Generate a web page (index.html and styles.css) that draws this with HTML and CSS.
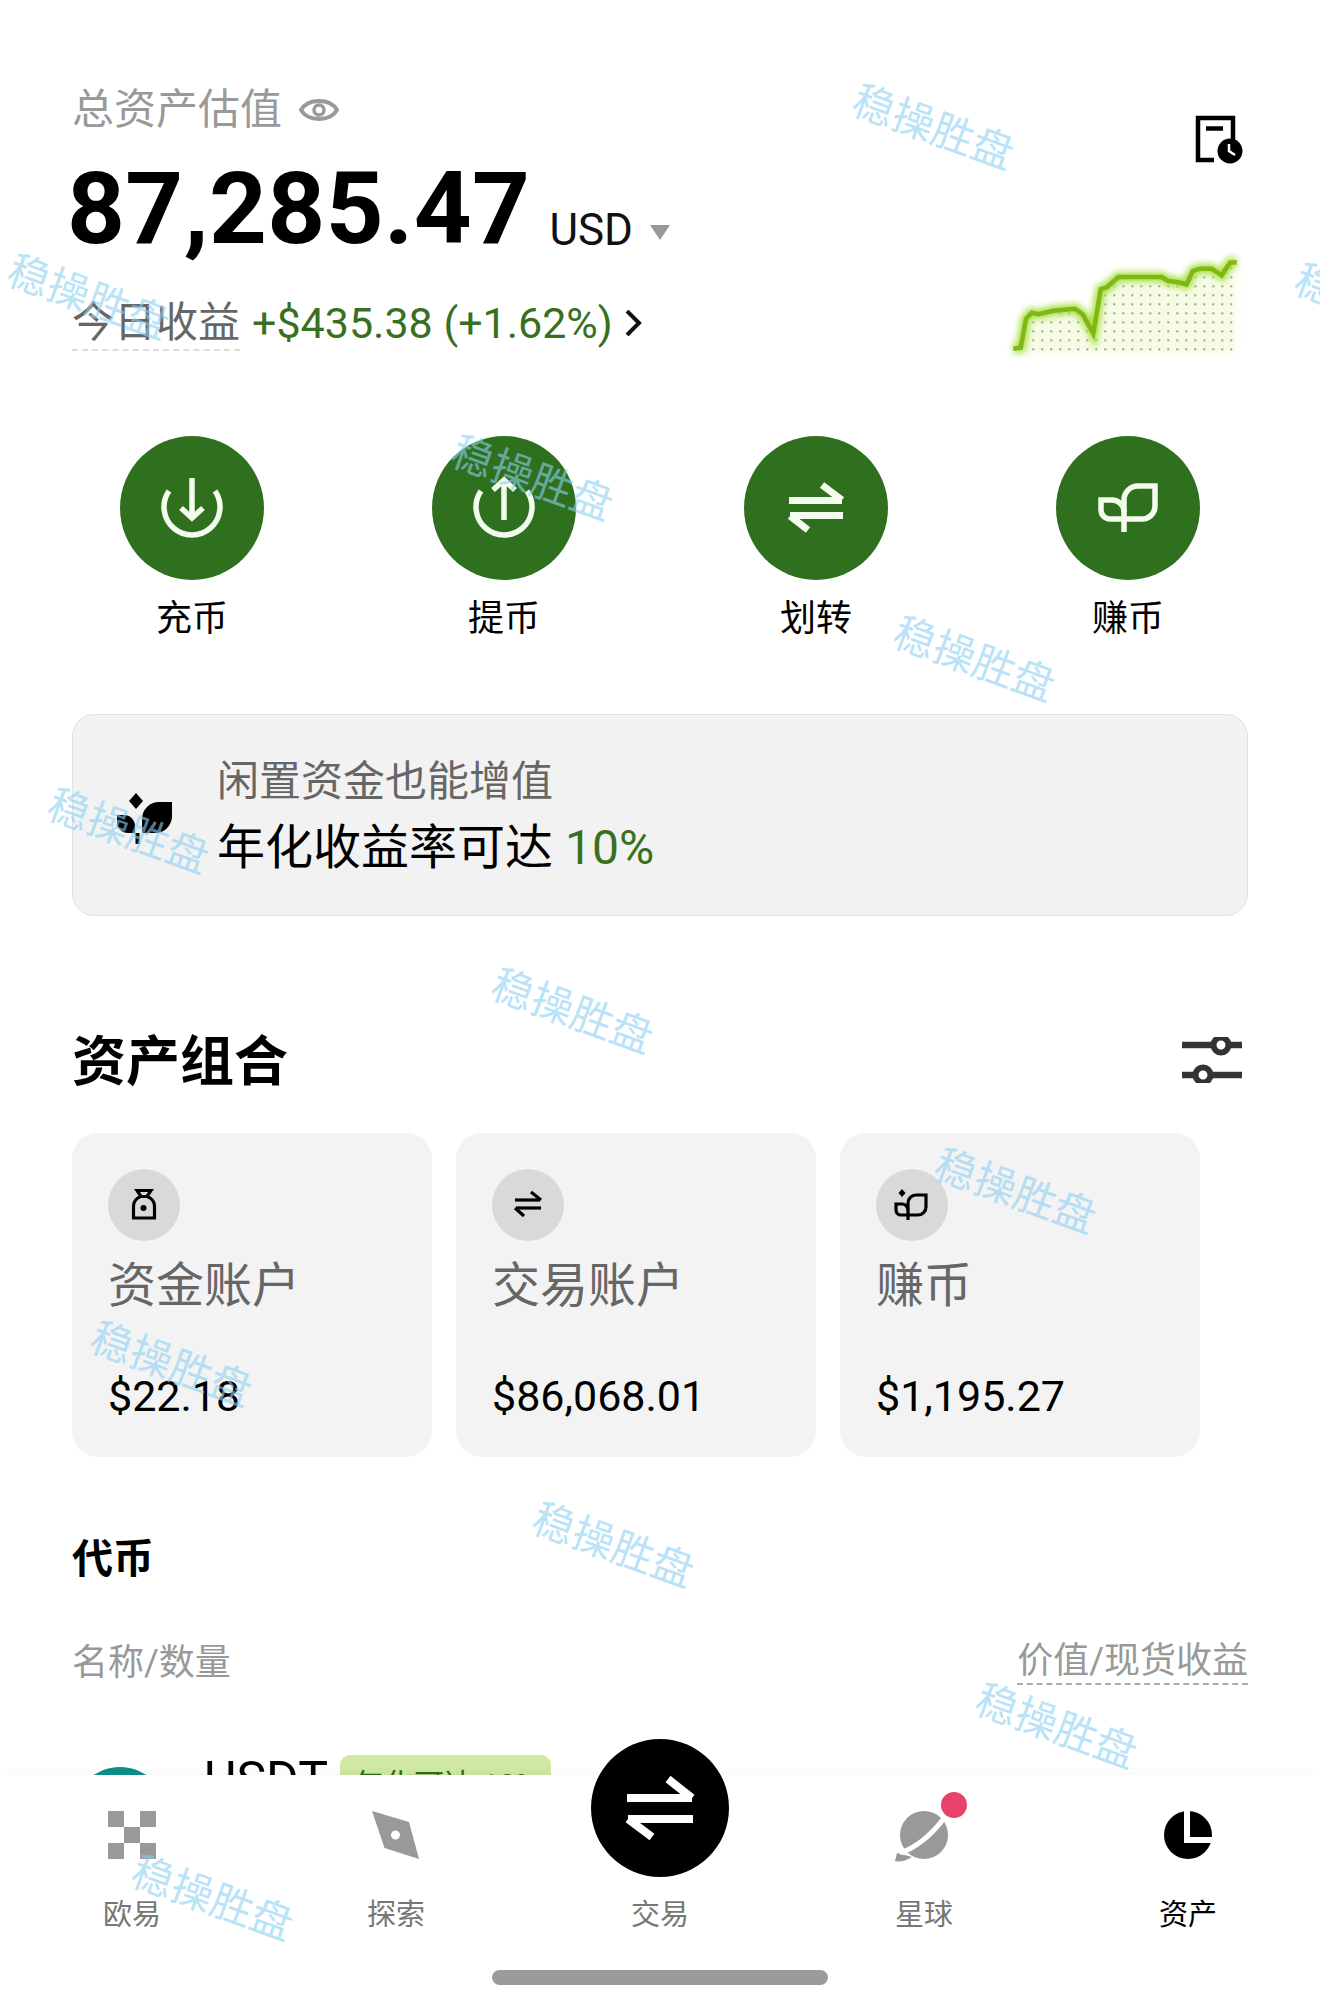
FILE: index.html
```html
<!DOCTYPE html>
<html lang="zh-CN">
<head>
    <meta charset="UTF-8">
    <meta name="viewport" content="width=device-width, initial-scale=1.0">
    <title>资产</title>
    <link rel="stylesheet" href="styles.css">
</head>
<body>

<div class="screen">
    <div class="content">
        <!-- 总资产 -->
        <section class="summary">
            <div class="summary-left">
                <div class="total-label">
                    总资产估值
                    <svg class="eye" viewBox="0 0 40 30" width="40" height="30">
                        <path d="M2 15C9 3 31 3 38 15C31 27 9 27 2 15Z" fill="none" stroke="#999" stroke-width="4"/>
                        <circle cx="20" cy="15" r="5" fill="none" stroke="#999" stroke-width="3.5"/>
                    </svg>
                </div>
                <div class="total-row">
                    <span class="total-num">87,285.47</span>
                    <span class="total-unit">USD</span>
                    <span class="caret"></span>
                </div>
                <div class="today-row">
                    <span class="today-label">今日收益</span>
                    <span class="today-value">+$435.38 (+1.62%)</span>
                    <svg class="chevron" viewBox="0 0 18 26" width="18" height="26">
                        <path d="M3 1L15 13L3 25" fill="none" stroke="#111" stroke-width="4"/>
                    </svg>
                </div>
            </div>
            <div class="summary-right">
                <svg class="doc-icon" viewBox="0 0 60 60" width="60" height="60">
                    <path d="M43 32V8H8V50H24" fill="none" stroke="#000" stroke-width="4.5"/>
                    <path d="M16 18.5H33" fill="none" stroke="#000" stroke-width="4.5"/>
                    <circle cx="40" cy="41" r="12.5" fill="#000"/>
                    <path d="M39 34V41L45 45" fill="none" stroke="#fff" stroke-width="2.5"/>
                </svg>
                <svg class="spark" viewBox="0 0 240 110" width="240" height="110">
                    <defs>
                        <pattern id="dots" patternUnits="userSpaceOnUse" x="27.3" y="96.3" width="9" height="9">
                            <rect width="2" height="2" fill="#9aa67a"/>
                        </pattern>
                        <filter id="glow" x="-10%" y="-30%" width="120%" height="160%">
                            <feGaussianBlur stdDeviation="3"/>
                        </filter>
                        <filter id="soft" x="-10%" y="-30%" width="120%" height="160%">
                            <feGaussianBlur stdDeviation="4"/>
                        </filter>
                    </defs>
                    <path class="spark-fill" filter="url(#soft)" d="M21 66.7L26.7 60.7L33.3 62.3L48.3 58.7L70 56.7L77.7 62.3L88.3 81.7L95.7 37.3L102.3 35L113.3 25L156.7 25L163.3 29L171.7 30L181.7 32.3L187.7 19L195 16.7L206.7 16.7L216.7 23.3L225 10.7L231 10.3V101H15Z"/>
                    <path fill="url(#dots)" d="M24 66.7L26.7 60.7L33.3 62.3L48.3 58.7L70 56.7L77.7 62.3L88.3 81.7L95.7 37.3L102.3 35L113.3 25L156.7 25L163.3 29L171.7 30L181.7 32.3L187.7 19L195 16.7L206.7 16.7L216.7 23.3L225 10.7L229 10.3V101H24Z"/>
                    <path class="spark-glow" filter="url(#glow)" d="M8.3 96.7L15.7 95.7L21 66.7L26.7 60.7L33.3 62.3L48.3 58.7L70 56.7L77.7 62.3L88.3 81.7L95.7 37.3L102.3 35L113.3 25L156.7 25L163.3 29L171.7 30L181.7 32.3L187.7 19L195 16.7L206.7 16.7L216.7 23.3L225 10.7L231.7 10.3"/>
                    <path class="spark-line" d="M8.3 96.7L15.7 95.7L21 66.7L26.7 60.7L33.3 62.3L48.3 58.7L70 56.7L77.7 62.3L88.3 81.7L95.7 37.3L102.3 35L113.3 25L156.7 25L163.3 29L171.7 30L181.7 32.3L187.7 19L195 16.7L206.7 16.7L216.7 23.3L225 10.7L231.7 10.3"/>
                </svg>
            </div>
        </section>

        <!-- 快捷操作 -->
        <nav class="actions">
            <div class="action">
                <div class="action-btn">
                    <svg viewBox="0 0 72 72" width="72" height="72">
                        <path d="M13 19A28 28 0 1 0 59 19" /><path d="M36 6V46" /><path d="M25 36L36 46L47 36" />
                    </svg>
                </div>
                <span>充币</span>
            </div>
            <div class="action">
                <div class="action-btn">
                    <svg viewBox="0 0 72 72" width="72" height="72">
                        <path d="M13 19A28 28 0 1 0 59 19" /><path d="M36 8V48" /><path d="M25 18L36 8L47 18" />
                    </svg>
                </div>
                <span>提币</span>
            </div>
            <div class="action">
                <div class="action-btn">
                    <svg class="swap-icon" viewBox="0 0 72 72" width="72" height="72">
                        <path d="M9 28.500H62" /><path d="M42 13L62 28" /><path d="M63 43.500H10" /><path d="M10 44L28 58" />
                    </svg>
                </div>
                <span>划转</span>
            </div>
            <div class="action">
                <div class="action-btn">
                    <svg viewBox="0 0 72 72" width="72" height="72">
                        <path d="M32 47H50A13 13 0 0 0 63 34V14H46A14 14 0 0 0 32 28V60" />
                        <path d="M32 47H18A9 9 0 0 1 9 38V28H20A12 12 0 0 1 32 40" />
                    </svg>
                </div>
                <span>赚币</span>
            </div>
        </nav>

        <!-- 赚币横幅 -->
        <div class="banner">
            <svg class="banner-icon" viewBox="0 0 56 52" width="56" height="52">
                <path d="M19 0L26 8L19 16L12 8Z" />
                <path d="M25 26A17 17 0 0 1 42 9H55V24A17 17 0 0 1 38 40H25Z" />
                <path d="M0 22H7A11 11 0 0 1 18 33V40H11A11 11 0 0 1 0 29Z" />
                <rect x="18.500" y="40" width="4" height="11" />
            </svg>
            <div class="banner-text">
                <div class="banner-sub">闲置资金也能增值</div>
                <div class="banner-main">年化收益率可达 <em>10%</em></div>
            </div>
        </div>

        <!-- 资产组合 -->
        <div class="section-head">
            <h2>资产组合</h2>
            <svg class="filter-icon" viewBox="0 0 62 46" width="62" height="46">
                <path d="M1 8H61M1 38H61" stroke="#333" stroke-width="6.5" fill="none"/>
                <circle cx="40" cy="8" r="7.500" fill="#fff" stroke="#333" stroke-width="6"/>
                <circle cx="22" cy="38" r="7.500" fill="#fff" stroke="#333" stroke-width="6"/>
            </svg>
        </div>

        <div class="cards">
            <div class="card">
                <div class="card-icon">
                    <svg viewBox="0 0 72 72" width="72" height="72">
                        <path d="M29 21.500H43L39 27.500H33Z" />
                        <path d="M33 27.500A10 10 0 0 0 25.500 38V49H46.500V38A10 10 0 0 0 39 27.500" />
                        <circle cx="35.500" cy="39" r="3" class="solid" />
                    </svg>
                </div>
                <div class="card-name">资金账户</div>
                <div class="card-value">$22.18</div>
            </div>
            <div class="card">
                <div class="card-icon">
                    <svg viewBox="0 0 72 72" width="72" height="72">
                        <path d="M23 31H48" /><path d="M39 23L49 31" /><path d="M49 39H24" /><path d="M23 39L32 47" />
                    </svg>
                </div>
                <div class="card-name">交易账户</div>
                <div class="card-value">$86,068.01</div>
            </div>
            <div class="card">
                <div class="card-icon">
                    <svg viewBox="0 0 72 72" width="72" height="72">
                        <path d="M26 20L29.500 24L26 28L22.500 24Z" class="solid" />
                        <path d="M32 46H42A8 8 0 0 0 50 38V26H40A8 8 0 0 0 32 34V51" />
                        <path d="M32 46H25A5 5 0 0 1 20 41V35H26A6 6 0 0 1 32 41" />
                    </svg>
                </div>
                <div class="card-name">赚币</div>
                <div class="card-value">$1,195.27</div>
            </div>
        </div>

        <!-- 代币 -->
        <h3 class="coin-title">代币</h3>
        <div class="coin-head">
            <span class="coin-head-left">名称/数量</span>
            <span class="coin-head-right">价值/现货收益</span>
        </div>
        <div class="coin-row">
            <div class="coin-logo"></div>
            <div class="coin-name">USDT</div>
            <div class="coin-tag">年化可达 10%</div>
        </div>
    </div>

    <!-- 底部导航 -->
    <footer class="tabbar">
        <div class="tabs">
            <div class="tab">
                <svg class="tab-icon" viewBox="0 0 64 52" width="64" height="52">
                    <path fill="#999" d="M8 0H24V16H8ZM40 0H56V16H40ZM24 16H40V32H24ZM8 32H24V48H8ZM40 32H56V48H40Z"/>
                </svg>
                <span>欧易</span>
            </div>
            <div class="tab">
                <svg class="tab-icon" viewBox="0 0 64 52" width="64" height="52">
                    <path fill="#999" fill-rule="evenodd" d="M8 0L45 11L55 48L20.500 37ZM36 24A4.500 4.500 0 1 0 27 24A4.500 4.500 0 1 0 36 24Z"/>
                </svg>
                <span>探索</span>
            </div>
            <div class="tab tab-center">
                <div class="trade-btn">
                    <svg viewBox="0 0 138 138" width="138" height="138">
                        <path d="M36 59H101" /><path d="M77 40L101 59" /><path d="M102 80H37" /><path d="M37 80L61 98" />
                    </svg>
                </div>
                <span>交易</span>
            </div>
            <div class="tab">
                <div class="planet">
                    <svg class="tab-icon" viewBox="0 0 64 52" width="64" height="52">
                        <circle cx="32" cy="24" r="24" fill="#999"/>
                        <path d="M5 42L3 50Q10 52 20 46Z" fill="#999"/>
                        <path d="M8 42Q32 34 53 6" fill="none" stroke="#fff" stroke-width="5"/>
                    </svg>
                    <span class="badge"></span>
                </div>
                <span>星球</span>
            </div>
            <div class="tab tab-active">
                <svg class="tab-icon" viewBox="0 0 64 52" width="64" height="52">
                    <circle cx="32" cy="24" r="24" fill="#000"/>
                    <path d="M31 0V29H56" fill="none" stroke="#fff" stroke-width="6"/>
                </svg>
                <span>资产</span>
            </div>
        </div>
        <div class="home-bar"></div>
    </footer>

    <!-- 水印 -->
    <span class="wm wm-1">稳操胜盘</span>
    <span class="wm wm-2">稳操胜盘</span>
    <span class="wm wm-3">稳操胜盘</span>
    <span class="wm wm-4">稳操胜盘</span>
    <span class="wm wm-5">稳操胜盘</span>
    <span class="wm wm-6">稳操胜盘</span>
    <span class="wm wm-7">稳操胜盘</span>
    <span class="wm wm-8">稳操胜盘</span>
    <span class="wm wm-9">稳操胜盘</span>
    <span class="wm wm-10">稳操胜盘</span>
    <span class="wm wm-11">稳操胜盘</span>
    <span class="wm wm-12">稳操胜盘</span>
</div>

</body>
</html>
```

FILE: styles.css
```css
body {
    margin: 0;
    padding: 0;
    background-color: #fff;
    color: #000;
    font-family: Roboto, "Noto Sans CJK SC", sans-serif;
}
.screen {
    position: relative;
    width: 1320px;
    height: 2003px;
    overflow: hidden;
    background-color: #fff;
}
.content {
    padding: 86px 72px 0;
}

/* 总资产 */
.summary {
    display: flex;
    justify-content: space-between;
}
.total-label {
    display: flex;
    align-items: center;
    gap: 17px;
    height: 48px;
    font-size: 42px;
    line-height: 48px;
    color: #999;
}
.total-row {
    display: flex;
    align-items: baseline;
    margin-top: 25px;
    margin-left: -5px;
    height: 100px;
}
.total-num {
    font-size: 101px;
    font-weight: 700;
    line-height: 100px;
    letter-spacing: 0.4px;
}
.total-unit {
    margin-left: 19px;
    font-size: 44px;
    color: #111;
    transform: translateY(2px);
}
.caret {
    align-self: center;
    width: 0;
    height: 0;
    margin-left: 17px;
    margin-top: 46px;
    border-left: 10px solid transparent;
    border-right: 10px solid transparent;
    border-top: 15px solid #999;
}
.today-row {
    display: flex;
    align-items: center;
    margin-top: 40px;
    height: 48px;
}
.today-label {
    font-size: 42px;
    line-height: 48px;
    color: #666;
    border-bottom: 2px dashed #ddd;
    padding-bottom: 2px;
    margin-bottom: -4px;
}
.today-value {
    margin-left: 12px;
    font-size: 43px;
    color: #38701f;
}
.chevron {
    margin-left: 11px;
}
.summary-right {
    display: flex;
    flex-direction: column;
    align-items: flex-end;
}
.doc-icon {
    margin-top: 24px;
    margin-right: -2px;
}
.spark {
    margin-top: 82px;
    margin-right: 3px;
}
.spark-fill {
    fill: #f6fbe6;
}
.spark-glow {
    fill: none;
    stroke: #a9df45;
    stroke-width: 10;
}
.spark-line {
    fill: none;
    stroke: #7fb814;
    stroke-width: 4.5;
}

/* 快捷操作 */
.actions {
    display: grid;
    grid-template-columns: repeat(4, 312px);
    margin: 74px -36px 0;
}
.action {
    display: flex;
    flex-direction: column;
    align-items: center;
    font-size: 36px;
    line-height: 40px;
}
.action-btn {
    display: flex;
    align-items: center;
    justify-content: center;
    width: 144px;
    height: 144px;
    margin-bottom: 19px;
    border-radius: 50%;
    background-color: #2f701f;
}
.action-btn path {
    fill: none;
    stroke: #f4fcee;
    stroke-width: 5.5;
}
.action-btn .swap-icon path {
    stroke-width: 7;
}

/* 横幅 */
.banner {
    display: flex;
    align-items: center;
    gap: 44px;
    box-sizing: border-box;
    height: 202px;
    margin-top: 75px;
    padding-left: 44px;
    background-color: #f2f2f2;
    border: 1px solid #e2e2e2;
    border-radius: 22px;
}
.banner-icon {
    fill: #000;
    margin-top: 8px;
}
.banner-sub {
    font-size: 42px;
    line-height: 66px;
    color: #666;
}
.banner-main {
    font-size: 48px;
    line-height: 66px;
}
.banner-main em {
    font-style: normal;
    color: #38701f;
}

/* 资产组合 */
.section-head {
    display: flex;
    align-items: center;
    justify-content: space-between;
    height: 64px;
    margin-top: 112px;
}
.section-head h2 {
    margin: 0 0 6px;
    font-size: 54px;
    font-weight: 700;
}
.filter-icon {
    margin-right: 5px;
}
.cards {
    display: flex;
    gap: 24px;
    margin-top: 41px;
}
.card {
    box-sizing: border-box;
    width: 360px;
    height: 324px;
    padding: 36px;
    background-color: #f3f3f3;
    border-radius: 26px;
}
.card-icon {
    width: 72px;
    height: 72px;
    border-radius: 50%;
    background-color: #d9d9d9;
}
.card-icon path {
    fill: none;
    stroke: #000;
    stroke-width: 3.2;
}
.card-icon .solid {
    fill: #000;
    stroke: none;
}
.card-name {
    margin-top: 17px;
    font-size: 48px;
    line-height: 56px;
    color: #666;
}
.card-value {
    margin-top: 57px;
    font-size: 43px;
    line-height: 50px;
}

/* 代币 */
.coin-title {
    margin: 77px 0 0;
    font-size: 41px;
    font-weight: 700;
    line-height: 50px;
}
.coin-head {
    display: flex;
    justify-content: space-between;
    align-items: flex-start;
    margin-top: 57px;
    height: 44px;
    font-size: 36px;
    line-height: 44px;
    color: #999;
}
.coin-head-right {
    margin-top: -2px;
    padding-bottom: 0;
    border-bottom: 2px dashed #aaa;
}
.coin-row {
    display: flex;
    align-items: flex-start;
    margin-top: 70px;
}
.coin-logo {
    width: 96px;
    height: 96px;
    margin-top: 12px;
    margin-right: 36px;
    border-radius: 50%;
    background-color: #0f8f8a;
}
.coin-name {
    font-size: 50px;
    line-height: 50px;
}
.coin-tag {
    margin-left: 12px;
    padding: 4px 14px;
    font-size: 30px;
    line-height: 52px;
    color: #2f6b1f;
    background-color: #cfe8a4;
    border-radius: 10px;
}

/* 底部导航 */
.tabbar {
    position: absolute;
    left: 0;
    right: 0;
    bottom: 0;
    height: 228px;
    background-color: #fff;
    box-shadow: 0 -2px 8px rgba(0, 0, 0, 0.04);
}
.tabs {
    display: grid;
    grid-template-columns: repeat(5, 264px);
    padding-top: 36px;
}
.tab {
    display: flex;
    flex-direction: column;
    align-items: center;
    font-size: 29px;
    line-height: 40px;
    color: #777;
}
.tab-icon {
    display: block;
    margin-bottom: 32px;
}
.tab-active {
    color: #000;
}
.planet {
    position: relative;
}
.badge {
    position: absolute;
    top: -19px;
    left: 49px;
    width: 26px;
    height: 26px;
    border-radius: 50%;
    background-color: #e8426b;
}
.trade-btn {
    width: 138px;
    height: 138px;
    margin-top: -72px;
    margin-bottom: 18px;
    border-radius: 50%;
    background-color: #000;
}
.trade-btn path {
    fill: none;
    stroke: #fff;
    stroke-width: 8;
}
.home-bar {
    width: 336px;
    height: 15px;
    margin: 35px auto 0;
    border-radius: 8px;
    background-color: #9b9b9b;
}

/* 水印 */
.wm {
    position: absolute;
    width: 168px;
    font-size: 42px;
    line-height: 42px;
    white-space: nowrap;
    color: rgba(140, 208, 243, 0.62);
    transform: rotate(20deg);
}
.wm-1 { left: 849px; top: 107px; }
.wm-2 { left: 4px; top: 277px; }
.wm-3 { left: 1291px; top: 286px; }
.wm-4 { left: 448px; top: 458px; }
.wm-5 { left: 890px; top: 639px; }
.wm-6 { left: 44px; top: 811px; }
.wm-7 { left: 488px; top: 991px; }
.wm-8 { left: 931px; top: 1171px; }
.wm-9 { left: 87px; top: 1344px; }
.wm-10 { left: 529px; top: 1525px; }
.wm-11 { left: 972px; top: 1706px; }
.wm-12 { left: 128px; top: 1878px; }
```
